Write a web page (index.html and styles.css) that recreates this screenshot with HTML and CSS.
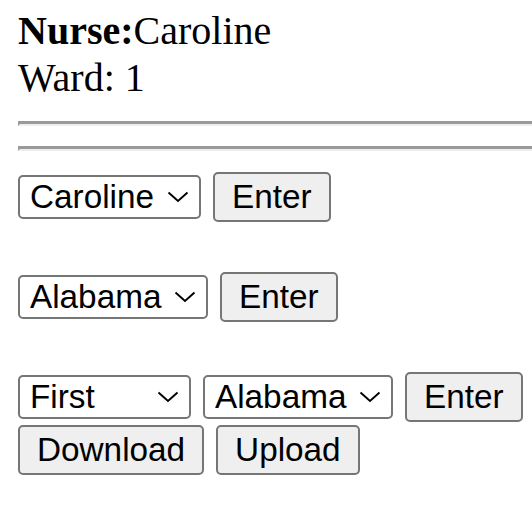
FILE: index.html
```html
<!DOCTYPE html>
<html>
<head>
<meta charset="utf-8">
<link rel="stylesheet" href="styles.css">
</head>
<body>
<div class="page">
  <div class="header">
    <b>Nurse:</b>Caroline<br>
    Ward: 1
  </div>
  <hr class="rule rule-first">
  <hr class="rule">
  <form class="rows">
    <div class="row row-1">
      <select class="sel w183"><option>Caroline</option></select>
      <button type="button" class="btn">Enter</button>
    </div>
    <div class="row row-gap">
      <select class="sel w190"><option>Alabama</option></select>
      <button type="button" class="btn">Enter</button>
    </div>
    <div class="row row-gap">
      <select class="sel w172"><option>First</option></select>
      <select class="sel w190"><option>Alabama</option></select>
      <button type="button" class="btn">Enter</button>
    </div>
    <div class="row row-tight">
      <button type="button" class="btn">Download</button>
      <button type="button" class="btn">Upload</button>
    </div>
  </form>
</div>
</body>
</html>
```

FILE: styles.css
```css
html, body {
  margin: 0;
  padding: 0;
  background: #ffffff;
}

.page {
  padding: 8px 0 8px 18px;
  font-family: "Liberation Serif", "Times New Roman", serif;
  color: #000;
}

.header {
  font-size: 40px;
  line-height: 46.5px;
}

.header b {
  font-weight: bold;
}

.rule {
  height: 0;
  margin: 20px 0 0 0;
  border-top: 3px solid #9a9a9a;
  border-left: 2px solid #9a9a9a;
  border-bottom: 2px solid #eeeeee;
  border-right: 0;
}

.rows {
  margin: 20px 0 0 0;
}

.row {
  display: flex;
  align-items: center;
  gap: 12px;
  height: 52px;
}

.row > * {
  flex-shrink: 0;
}

.row-gap {
  margin-top: 48px;
}

.row-tight {
  margin-top: 1px;
}

.sel {
  -webkit-appearance: none;
  appearance: none;
  box-sizing: border-box;
  height: 44px;
  margin: 0;
  padding: 0 0 0 10px;
  border: 2px solid #767676;
  border-radius: 5px;
  background-color: #ffffff;
  background-image: url("data:image/svg+xml;utf8,<svg xmlns='http://www.w3.org/2000/svg' width='22' height='12' viewBox='0 0 22 12'><polyline points='1.5,1.5 11,10 20.5,1.5' fill='none' stroke='black' stroke-width='1.9'/></svg>");
  background-repeat: no-repeat;
  background-position: right 10px center;
  background-size: 22px 12px;
  font-family: "Liberation Sans", Arial, sans-serif;
  font-size: 33.3px;
  line-height: 38px;
  color: #000;
}

.w183 { width: 183px; }
.w190 { width: 190px; }
.w172 { width: 173px; }

.btn {
  box-sizing: border-box;
  height: 50px;
  margin: 0;
  padding: 0 17px;
  border: 2px solid #767676;
  border-radius: 5px;
  background: #efefef;
  font-family: "Liberation Sans", Arial, sans-serif;
  font-size: 33.3px;
  line-height: 38px;
  color: #000;
}
```
